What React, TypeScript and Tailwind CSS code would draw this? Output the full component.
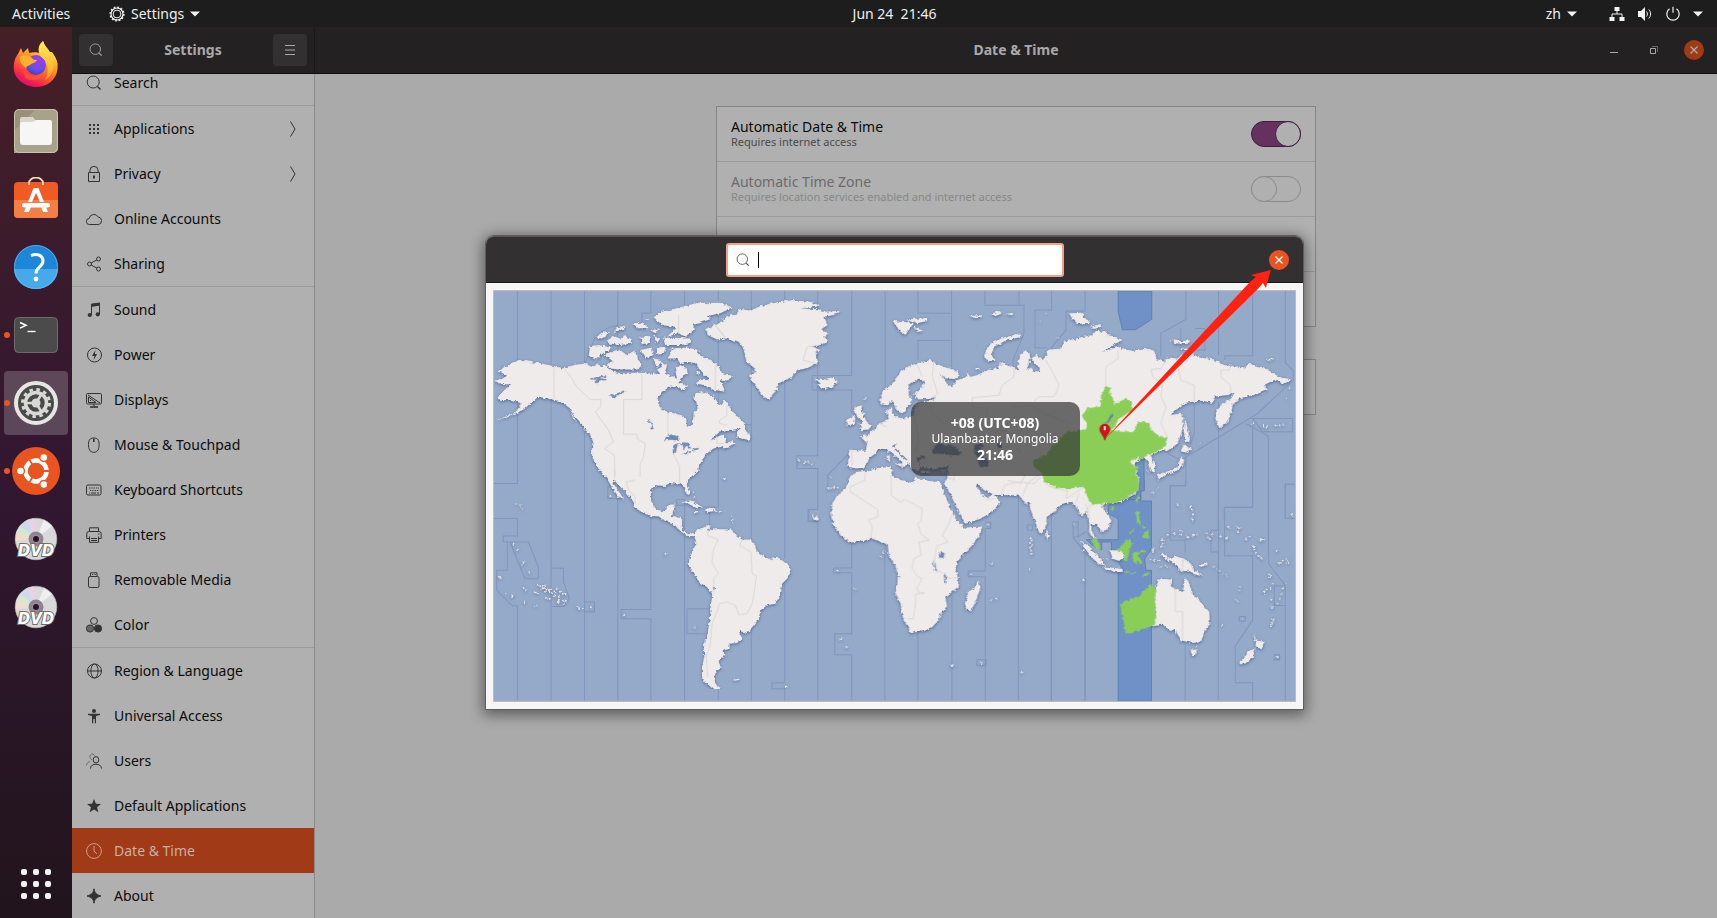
import React from 'react';

interface IconProps {
  className?: string;
}

interface PanelItem {
  label: string;
  icon: React.ReactNode;
  arrow?: boolean;
  active?: boolean;
}

const Glyph: React.FC<{ children: React.ReactNode; className?: string }> = ({ children, className = 'w-4 h-4' }) => (
  <svg viewBox="0 0 16 16" className={`${className} shrink-0`} fill="none" stroke="currentColor" strokeWidth="1" aria-hidden="true">
    {children}
  </svg>
);

const SearchGlyph: React.FC<IconProps> = ({ className }) => (
  <Glyph className={className}>
    <circle cx="7.2" cy="7" r="6" />
    <path d="M11.5 11.5l3 3" strokeWidth="1.4" />
  </Glyph>
);

const groups: PanelItem[][] = [
  [{ label: 'Search', icon: <SearchGlyph /> }],
  [
    {
      label: 'Applications',
      arrow: true,
      icon: (
        <Glyph>
          <path d="M3 4h2m2 0h2m2 0h2M3 8h2m2 0h2m2 0h2M3 12h2m2 0h2m2 0h2" strokeWidth="2" />
        </Glyph>
      ),
    },
    {
      label: 'Privacy',
      arrow: true,
      icon: (
        <Glyph>
          <path d="M2.5 6.5h11v9h-11zM4 6V4a4 3.6 0 0 1 8 0v2" />
          <path d="M8 9.5v3" strokeWidth="2" />
        </Glyph>
      ),
    },
    {
      label: 'Online Accounts',
      icon: (
        <Glyph>
          <path d="M3.5 13.5a3 3 0 0 1-.3-6A4.8 4.8 0 0 1 12.2 6a3.6 3.8 0 0 1 .5 7.5z" />
        </Glyph>
      ),
    },
    {
      label: 'Sharing',
      icon: (
        <Glyph>
          <circle cx="3.5" cy="8" r="2" />
          <circle cx="12.5" cy="3" r="2" />
          <circle cx="12.5" cy="13" r="2" />
          <path d="M5.2 7l5.600-3M5.200 9l5.600 3" />
        </Glyph>
      ),
    },
  ],
  [
    {
      label: 'Sound',
      icon: (
        <Glyph>
          <path d="M5.5 13V2.500l8-1V12" />
          <path d="M5 1.800l9-1.300v3L5 5z" fill="currentColor" stroke="none" />
          <circle cx="3.8" cy="13" r="2.1" fill="currentColor" stroke="none" />
          <circle cx="11.8" cy="12.3" r="2.1" fill="currentColor" stroke="none" />
        </Glyph>
      ),
    },
    {
      label: 'Power',
      icon: (
        <Glyph>
          <circle cx="8.5" cy="8" r="7" />
          <path d="M9.5 3L6 9h2.300l-.6 4L11 7H8.900z" fill="currentColor" stroke="none" />
        </Glyph>
      ),
    },
    {
      label: 'Displays',
      icon: (
        <Glyph>
          <rect x=".5" y="1.5" width="15" height="10.5" rx="1.2" />
          <path d="M2 3l12 8M2.500 5v5.500H10zM4.500 8v1M8 12v3" />
          <path d="M4 15h8" strokeWidth="1.6" />
        </Glyph>
      ),
    },
    {
      label: 'Mouse & Touchpad',
      icon: (
        <Glyph>
          <path d="M2.500 7.500c0-4 1-6.500 5.300-6.500s5.300 2.500 5.300 6.500-1 7.800-5.300 7.800-5.300-3.800-5.300-7.800z" />
          <path d="M7.800 1.500V5" strokeWidth="1.6" />
        </Glyph>
      ),
    },
    {
      label: 'Keyboard Shortcuts',
      icon: (
        <Glyph>
          <rect x=".5" y="3" width="14.5" height="10" rx="1.5" />
          <path d="M3 6h10M4 8.500h9" strokeDasharray="1.3 1" />
          <path d="M3 11h1M5 11h5M11 11h2" />
        </Glyph>
      ),
    },
    {
      label: 'Printers',
      icon: (
        <Glyph>
          <path d="M3.500 4V.8h9V4M3 11.500H.8V6.500a2 2 0 0 1 2-2h10.400a2 2 0 0 1 2 2v5H13M3.500 9.500v5.800h9V9.500M5 11.500h6M5 13.500h6" />
          <path d="M12 7h1.500" />
        </Glyph>
      ),
    },
    {
      label: 'Removable Media',
      icon: (
        <Glyph>
          <rect x="2.5" y="4.5" width="10.5" height="11" rx="1.6" />
          <path d="M4.500 4V.8h6.500V4M6 2.500h1.200M8.500 2.500h1.200" />
        </Glyph>
      ),
    },
    {
      label: 'Color',
      icon: (
        <Glyph>
          <circle cx="8" cy="4" r="3.4" />
          <circle cx="4" cy="11.5" r="3.6" fill="#666" />
          <circle cx="12" cy="11.5" r="3.6" fill="currentColor" />
        </Glyph>
      ),
    },
  ],
  [
    {
      label: 'Region & Language',
      icon: (
        <Glyph>
          <circle cx="8.5" cy="8" r="7" />
          <ellipse cx="8.5" cy="8" rx="3.6" ry="7" />
          <path d="M1.500 8h14" />
        </Glyph>
      ),
    },
    {
      label: 'Universal Access',
      icon: (
        <Glyph>
          <circle cx="8" cy="3" r="2" fill="currentColor" stroke="none" />
          <path d="M2 5.800h12v1.200L10 8v7.200H8.800V11H7.200v4.200H6V8L2 7z" fill="currentColor" stroke="none" />
        </Glyph>
      ),
    },
    {
      label: 'Users',
      icon: (
        <Glyph>
          <path d="M.5 12.500c.3-2.500 1.500-3.500 3.700-4M6 6.500C3 6 3.300 1 6.200 1c1.600 0 2.300 1 2.600 2" opacity=".5" />
          <ellipse cx="10" cy="6.8" rx="2.8" ry="3.2" />
          <path d="M4.500 15.500c.3-3 2-4.200 5.500-4.200s5.200 1.200 5.500 4.200" />
        </Glyph>
      ),
    },
    {
      label: 'Default Applications',
      icon: (
        <Glyph>
          <path d="M8 1l1.900 4.800 5.100.2-4 3.300 1.400 5L8 11.500l-4.400 2.800 1.400-5L1 6l5.100-.2z" fill="currentColor" stroke="none" />
        </Glyph>
      ),
    },
    {
      label: 'Date & Time',
      active: true,
      icon: (
        <Glyph>
          <circle cx="8" cy="8" r="7.4" />
          <path d="M8 3v5.200l3 2.600" />
        </Glyph>
      ),
    },
    {
      label: 'About',
      icon: (
        <Glyph>
          <path d="M8 .8c.8 4.600 2.500 6 7 7.200-4.500 1.200-6.200 2.600-7 7.200-.8-4.600-2.500-6-7-7.200 4.500-1.200 6.200-2.600 7-7.200z" fill="currentColor" />
        </Glyph>
      ),
    },
  ],
];

const FirefoxIcon = () => (
  <svg viewBox="0 -1 48 48" className="w-12 h-12" aria-hidden="true">
    <defs>
      <linearGradient id="fx-body" x1="0.8" y1="0" x2="0.3" y2="1">
        <stop offset="0" stopColor="#fff44f" />
        <stop offset=".35" stopColor="#ffb02e" />
        <stop offset=".6" stopColor="#ff6a2b" />
        <stop offset=".85" stopColor="#f5204d" />
        <stop offset="1" stopColor="#d80a7b" />
      </linearGradient>
      <radialGradient id="fx-globe" cx=".6" cy=".2" r=".9">
        <stop offset="0" stopColor="#a43be8" />
        <stop offset=".6" stopColor="#6a4ee8" />
        <stop offset="1" stopColor="#3d3aa5" />
      </radialGradient>
      <linearGradient id="fx-tail" x1="0" y1="0" x2="0" y2="1">
        <stop offset="0" stopColor="#fff44f" />
        <stop offset="1" stopColor="#ff9a2a" />
      </linearGradient>
    </defs>
    <path d="M6 14l3-6 2 5 5-5 1 5c4-1 8-1 10 0l4-12c2 6 4 7 6 11l3 0c6 8 7 16 4 23-4 8-11 12-20 12S5 41 2.500 33C.8 26 2 19 6 14z" fill="url(#fx-body)" />
    <circle cx="24" cy="25" r="10" fill="url(#fx-globe)" />
    <path d="M27 13c-1-5 0-9 4-12 2 6 5 7 7 11 5 3 7 8 8 14-1-3-3-5-5-6 2 9-1 16-8 20 3-5 4-11 1-17-1-5-6-5-7-10z" fill="url(#fx-tail)" />
    <path d="M8 17c4-3 9-2 12 1 1 2 3 2 5 2-1 3-5 3-7 5-2 1-4 1-4 3-3-2-7-6-6-11z" fill="#ffb12e" />
    <path d="M12 30c3 6 13 8 20 3-3 7-11 9-17 6-3-2-4-5-3-9z" fill="#ff5a35" opacity=".7" />
  </svg>
);

const FilesIcon = () => (
  <svg viewBox="0 0 44 44" className="w-11 h-11" aria-hidden="true">
    <rect width="44" height="44" rx="5" fill="#989179" />
    <path d="M0 44V22L22 0h17a5 5 0 0 1 5 5v34a5 5 0 0 1-5 5z" fill="#a9a28b" />
    <rect x=".5" y=".5" width="43" height="43" rx="5" fill="none" stroke="#c9c4b0" />
    <path d="M6 10a2 2 0 0 1 2-2h11l3 4v8H6z" fill="#d9d5c7" />
    <path d="M6 15a2 2 0 0 1 2-2h11l3-2h14a2 2 0 0 1 2 2v20a3 3 0 0 1-3 3H9a3 3 0 0 1-3-3z" fill="#f7f6f5" />
  </svg>
);

const SoftwareIcon = () => (
  <svg viewBox="0 2 44 44" className="w-11 h-11" aria-hidden="true">
    <rect y="7" width="44" height="36" rx="4" fill="#f15a24" />
    <path d="M0 25h44v14a4 4 0 0 1-4 4H4a4 4 0 0 1-4-4z" fill="#f37f45" />
    <path d="M15 10V8a7 5.400 0 0 1 14 0v2" fill="none" stroke="#f5dcb0" strokeWidth="1.8" />
    <path d="M14 27l5.500-14h5L30 27h-4l-4-9-4 9zM12 32h5l-2 5h-5zM27 32h5l2 5h-5z" fill="#fff" />
    <rect x="8" y="28" width="28" height="4.5" rx="2.2" fill="#fff" />
  </svg>
);

const HelpIcon = () => (
  <svg viewBox="0 0 44 44" className="w-11 h-11" aria-hidden="true">
    <circle cx="22" cy="22" r="22" fill="#1e86d9" />
    <path d="M0 24a22 20 0 0 0 44 0z" fill="#46a9e9" />
    <circle cx="22" cy="22" r="21.5" fill="none" stroke="#6bbcf0" opacity=".7" />
    <path d="M17 10.500c7-2.500 12 .5 12 5.500 0 6-7 6-7 12.500" fill="none" stroke="#fff" strokeWidth="3" />
    <circle cx="22" cy="34" r="2.4" fill="#fff" />
  </svg>
);

const TerminalIcon = () => (
  <svg viewBox="0 0 44 36" className="w-11 h-9" aria-hidden="true">
    <rect x=".5" y=".5" width="43" height="35" rx="4" fill="#4b4b4b" stroke="#6b6b6b" />
    <path d="M6 5.500l6 2.800-6 2.800" fill="none" stroke="#fff" strokeWidth="1.6" />
    <path d="M13.500 14.500h8" stroke="#fff" strokeWidth="1.4" />
  </svg>
);

const SettingsIcon = () => (
  <svg viewBox="0 0 44 44" className="w-11 h-11" aria-hidden="true">
    <circle cx="22" cy="22" r="20" fill="#4a4a4a" stroke="#e6e6e4" strokeWidth="4" />
    <circle cx="22" cy="22" r="13.5" fill="none" stroke="#d9d9d7" strokeWidth="3" strokeDasharray="3.5 3.57" />
    <circle cx="22" cy="22" r="10.5" fill="none" stroke="#d9d9d7" strokeWidth="3.6" />
    <path d="M22 22h-9M22 22l5-8M22 22l5 8" stroke="#d9d9d7" strokeWidth="2.5" />
    <circle cx="22" cy="22" r="4.5" fill="#d9d9d7" />
  </svg>
);

const UbuntuIcon = () => (
  <svg viewBox="0 0 48 48" className="w-12 h-12" aria-hidden="true">
    <circle cx="24" cy="24" r="24" fill="#e95420" />
    <circle cx="24" cy="24" r="10.5" fill="none" stroke="#fff" strokeWidth="4.5" />
    <path d="M24 24H40M24 24L16 10.100M24 24L16 37.900" stroke="#e95420" strokeWidth="1.8" />
    <g fill="#fff" stroke="#e95420" strokeWidth="1.5">
      <circle cx="8.5" cy="24" r="4" />
      <circle cx="31.8" cy="10.5" r="4" />
      <circle cx="31.8" cy="37.5" r="4" />
    </g>
  </svg>
);

const DvdIcon = () => (
  <svg viewBox="0 0 44 44" className="w-11 h-11" aria-hidden="true">
    <circle cx="22" cy="22" r="20.8" fill="#d9d9d9" stroke="#bdbdbd" strokeWidth=".6" />
    <path d="M22 22L6 8.500 2 16z" fill="#cfe9d4" />
    <path d="M22 22L2.500 15 1.500 24z" fill="#f0dccb" />
    <path d="M22 22L13 3l-6 5z" fill="#cbdcf0" />
    <path d="M22 22L20 1.200l-7 1.800z" fill="#ead2e6" />
    <path d="M22 22L30 3l8 6z" fill="#efefef" />
    <circle cx="22" cy="22" r="7.5" fill="#8e8490" />
    <circle cx="22" cy="22" r="3.6" fill="#2c1228" stroke="#b5adb5" strokeWidth=".8" />
    <text
      x="22"
      y="39"
      textAnchor="middle"
      className="font-['DejaVu_Sans'] text-[15px] font-bold italic"
      fill="#fff"
      stroke="#6c6c6c"
      strokeWidth="2"
      paintOrder="stroke"
    >
      DVD
    </text>
  </svg>
);

const dockApps = [
  { name: 'Firefox', icon: <FirefoxIcon /> },
  { name: 'Files', icon: <FilesIcon /> },
  { name: 'Ubuntu Software', icon: <SoftwareIcon /> },
  { name: 'Help', icon: <HelpIcon /> },
  { name: 'Terminal', icon: <TerminalIcon />, running: true },
  { name: 'Settings', icon: <SettingsIcon />, running: true, focused: true },
  { name: 'Ubuntu', icon: <UbuntuIcon />, running: true },
  { name: 'DVD 1', icon: <DvdIcon /> },
  { name: 'DVD 2', icon: <DvdIcon /> },
];

const Caret = () => (
  <svg viewBox="0 0 10 6" className="w-[10px] h-[6px]" aria-hidden="true">
    <path d="M0 .5h10L5 5.500z" fill="#f2f2f2" />
  </svg>
);

const TopBar = () => (
  <header className="h-[27px] shrink-0 flex items-center bg-[#1d1d1d] text-[#eeeeee] text-sm">
    <div className="w-[72px] shrink-0 pl-3">
      <button>Activities</button>
    </div>
    <div className="flex-1 grid grid-cols-[1fr_auto_1fr] items-center">
      <button className="flex items-center gap-[6px] pl-[37px] justify-self-start">
        <svg viewBox="0 0 16 16" className="w-4 h-4" fill="none" stroke="currentColor" aria-hidden="true">
          <circle cx="8" cy="8" r="6.6" strokeWidth="2" strokeDasharray="1.7 1.76" />
          <circle cx="8" cy="8" r="6" strokeWidth="1.2" />
          <circle cx="8" cy="8" r="3.9" strokeWidth="1" />
        </svg>
        <span>Settings</span>
        <Caret />
      </button>
      <button className="whitespace-pre">Jun 24  21:46</button>
      <div className="flex items-center justify-self-end pr-[14px]">
        <button className="flex items-center gap-[6px]">
          zh <Caret />
        </button>
        <button className="flex items-center gap-3 ml-8" aria-label="System menu">
          <svg viewBox="0 0 16 16" className="w-4 h-4" aria-hidden="true">
            <path d="M5.500 1h5v4h-5zM.5 11h5v4h-5zM10.500 11h5v4h-5z" fill="#f2f2f2" />
            <path d="M8 5v3M3 11V8h10v3" fill="none" stroke="#f2f2f2" />
          </svg>
          <svg viewBox="0 0 16 16" className="w-4 h-4" fill="none" stroke="#f2f2f2" aria-hidden="true">
            <path d="M1 5h3l4-4v14l-4-4H1z" fill="#f2f2f2" stroke="none" />
            <path d="M9.500 5.500c1.200 1.500 1.200 3.500 0 5M11.800 3.500c2.400 2.600 2.400 6.400 0 9" />
          </svg>
          <svg viewBox="0 0 16 16" className="w-4 h-4" fill="none" stroke="#f2f2f2" aria-hidden="true">
            <path d="M8 .8v6M4.500 2.800a6.200 6.200 0 1 0 7 0" strokeWidth="1.2" />
          </svg>
          <Caret />
        </button>
      </div>
    </div>
  </header>
);

const Dock = () => (
  <nav className="w-[72px] shrink-0 flex flex-col items-center pt-1 bg-linear-to-b from-[#451f26] via-[#321731] to-[#21141c]">
    <ul className="flex flex-col gap-1">
      {dockApps.map((app) => (
        <li key={app.name} className="relative">
          {app.running && <span className="absolute top-[29px] left-0 w-[6px] h-[6px] rounded-full bg-[#e95420]" />}
          <button
            aria-label={app.name}
            className={`w-16 h-16 flex items-center justify-center rounded-[4px] ${app.focused ? 'bg-white/20' : ''}`}
          >
            {app.icon}
          </button>
        </li>
      ))}
    </ul>
    <button className="mt-auto mb-[19px] grid grid-cols-3 gap-[6px]" aria-label="Show Applications">
      {Array.from({ length: 9 }, (_, i) => (
        <span key={i} className="w-[6px] h-[6px] rounded-[2px] bg-[#f2f2f2]" />
      ))}
    </button>
  </nav>
);

const Sidebar = () => (
  <aside className="flex-1 min-h-0 flex flex-col justify-end overflow-hidden bg-[#b0b0b0] border-r border-[#8b8b8b]">
    {groups.map((items, i) => (
      <ul key={i} className={i > 0 ? 'border-t border-[#9b9b9b]' : ''}>
        {items.map((item) => (
          <li key={item.label}>
            <button
              className={`w-full h-[45px] flex items-center gap-3 pl-[14px] pr-[18px] text-sm text-left ${
                item.active ? 'bg-[#a03a17] text-[#c9b0a6]' : 'text-[#0c0c0c]'
              }`}
            >
              <span className={item.active ? 'text-[#cf9c8b]' : 'text-[#333333]'}>{item.icon}</span>
              <span className="flex-1">{item.label}</span>
              {item.arrow && (
                <svg viewBox="0 0 6 16" className="w-[6px] h-4" fill="none" stroke="#333" aria-hidden="true">
                  <path d="M.5 .5L5 8 .5 15.500" />
                </svg>
              )}
            </button>
          </li>
        ))}
      </ul>
    ))}
  </aside>
);

const Setting: React.FC<{ id: string; title: string; note: string; on?: boolean; disabled?: boolean }> = ({ id, title, note, on, disabled }) => (
  <div className="h-[55px] flex items-center justify-between px-[14px] border-b border-[#9b9b9b]">
    <label htmlFor={id} className={disabled ? 'text-[#6b6b6b]' : 'text-[#0c0c0c]'}>
      <span className="block text-sm leading-4">{title}</span>
      <span className={`block text-[11px] leading-[14px] ${disabled ? 'text-[#858985]' : 'text-[#4b4b4b]'}`}>{note}</span>
    </label>
    <input
      id={id}
      type="checkbox"
      role="switch"
      defaultChecked={on}
      disabled={disabled}
      className="appearance-none w-[50px] h-[26px] rounded-full border border-[#8b8b8b] flex items-center checked:bg-[#65315e] checked:border-[#3f1c3a] before:content-[''] before:w-[26px] before:h-[26px] before:-m-px before:rounded-full before:border before:border-[#8b8b8b] before:bg-[#b0b0b0] checked:before:ml-[23px] checked:before:border-[#3f1c3a]"
    />
  </div>
);

// Each region of the map is drawn at three times its size from its own corner.
const AT = {
  northAmerica: 'translate(480 230) scale(.33333)',
  southAmerica: 'translate(480 470) scale(.33333)',
  europe: 'translate(700 280) scale(.33333)',
  africa: 'translate(800 440) scale(.33333)',
  asia: 'translate(1000 280) scale(.33333)',
  oceania: 'translate(1020 480) scale(.33333)',
};

const Isles: React.FC<{ points: number[][]; r?: number }> = ({ points, r = 3 }) => (
  <>
    {points.map(([x, y]) => (
      <circle key={`${x}-${y}`} cx={x} cy={y} r={r} />
    ))}
  </>
);

const ZoneLines = () => (
  <g fill="none" stroke="#8196bb" strokeWidth="3">
    <g transform={AT.southAmerica}>
      <path d="M112-540V40H42M42 145H112V197H70V215H145L175 290V325H135L90 215M82 215V300H50V360L97 406H112V690" />
      <path d="M213-540V690M213 294H250V334L268 385L250 408H213M313-540V690M313 395H343V424H313M413-540V690" />
      <path d="M512-540V-470H485V-440M512 120V417H423V445H512V690M613-540V-400M613 105H590V88H613V690M692 415H620V490H680" />
      <path d="M714-540V110H645M688 125V165M714 655V690M813-540V230M813-136H780M813 470V690M913-540V265M913 330V637H875V655H913V690M1013 118H985V153H1013M410 50H383V85H425" />
      <path d="M413-435L380-425L345-400L315-320" />
    </g>
    <g transform={AT.europe}>
      <path d="M454 33V286H335V330H454V400M352 33V527H290V565H352V688H322M445 520L382 585V630M554 33V340" />
      <path d="M652 33V100H753M753 33V265M753 181H652V240M853 33V76H970V160L937 240V262M955 33V76" />
    </g>
    <g transform={AT.africa}>
      <path d="M52 208H23V243H52V780M154 305V383H100V397H154V580H103V643H154V780M253 320V780M352 578V780M454 460V780" />
      <path d="M554 245H570V265H554V392H503V409H554V780M653 165V780M752 220V780M853 310V780M817 245H832V290H817ZM832 290L855 275M817 292L860 345M680 254h16v16h-16zM529 658h27v18h-27z" />
    </g>
    <g transform={AT.asia}>
      <path d="M153 33V90H103V203H137M253 33V93H196V150L150 205M555 33V118L480 160V230M653 33V225M583 145H612V210H540V145" />
      <path d="M755 33V227H672V240M853 33V248L877 272V300L770 400L540 540L500 520M875 415H755L785 455H875ZM735 430L802 468V820M555 530V616H508V720" />
      <path d="M653 365V900M670 720V682H755V445M883 612H853V715H883M580 340V460L560 520" />
    </g>
    <g transform={AT.oceania}>
      <path d="M494 0V17H448V180H493V220M493 490V660M592 0V150H570V215H592V660M695 0V80H611V226H695V420L643 497V607H695V660" />
      <path d="M743 0V250L793 315V375H760V317H793M793 375V660M193 305V660M92 180V660M822 12H793V115H822M655 408h18v14h-18zM760 523h16v15h-16z" />
    </g>
  </g>
);

const Land = () => (
  <g fill="#efebea" filter="url(#coast)">
    <g transform={AT.northAmerica}>
      <path d="M43 573L75 558L105 548L125 520L95 510L65 510L50 505L62 490L75 478L90 463L62 462L45 452L75 443L80 435L55 425L70 412L95 398L120 388L150 396L185 400L220 408L250 415L270 408L290 403L315 400L335 410L350 402L365 408L385 405L380 412L400 425L425 430L445 428L485 428L515 430L540 432L530 418L545 410L540 395L560 405L555 425L575 440L590 445L585 420L600 405L620 415L622 430L605 440L595 455L590 470L570 470L545 485L533 505L535 525L548 540L575 548L605 555L618 565L620 585L632 590L638 570L640 550L652 535L648 515L640 505L645 490L670 485L700 500L715 520L725 525L732 508L745 525L760 550L790 575L792 588L765 598L735 600L715 605L700 618L692 630L715 618L730 612L738 625L735 640L755 632L765 640L730 655L725 648L700 655L680 670L665 690L655 705L655 720L632 740L620 752L620 765L630 785L628 793L615 785L608 765L595 760L570 760L555 767L525 765L512 780L512 810L525 835L545 842L558 838L562 823L585 823L578 845L575 860L605 863L605 900L625 912L645 908L650 918L625 917L610 910L592 895L580 880L550 870L535 858L515 858L490 848L462 832L460 815L440 790L415 765L402 750L400 760L420 790L433 810L415 800L395 770L380 745L360 722L345 700L335 680L335 655L340 640L335 625L325 605L310 590L295 570L280 555L270 535L250 520L235 512L200 505L175 500L150 520L135 535L120 545L75 562Z" />
      <path d="M520 262L545 245L600 232L650 218L720 218L757 232L720 250L680 258L690 268L640 285L640 300L615 320L595 310L560 320L590 292L545 285ZM548 322L630 325L635 338L600 345L555 345Z" />
      <path d="M565 385L575 355L620 352L650 358L660 375L690 390L715 410L725 428L755 438L740 455L720 450L735 485L700 480L670 465L645 460L660 450L685 450L670 430L655 415L650 400L620 395L600 400L590 385Z" />
      <path d="M370 372L400 365L420 360L440 375L465 360L470 385L485 400L475 418L420 418L390 415L380 402L400 395ZM330 348L355 345L395 352L385 362L365 370L345 388L325 378Z" />
      <path d="M380 332L400 318L420 325L435 315L455 328L455 340L420 345L390 340ZM345 322L375 303L390 308L365 325ZM412 292L432 288L432 300L400 305ZM460 280L490 278L503 295L470 295ZM480 320L510 318L512 340L485 342ZM518 315L540 325L530 340ZM480 360L515 352L520 375L495 385ZM530 352L558 350L550 370L530 375ZM520 385L545 390L530 415ZM590 455L625 470L610 480L590 470ZM495 265L506 270L500 272ZM510 300L540 298L525 310Z" />
      <path d="M770 605L790 585L795 600L810 615L810 630L770 622ZM310 595L348 615L342 625ZM272 545L290 575L280 570ZM645 420L660 425L655 435Z" />
    </g>
    <g transform={AT.southAmerica}>
      <path d="M640 188L660 175L688 165L690 180L710 176L750 178L765 192L785 208L808 208L825 225L830 245L865 265L895 262L925 285L932 298L920 325L905 340L902 370L885 400L860 405L840 420L835 445L820 465L800 488L775 480L785 505L770 518L748 520L748 535L730 540L732 555L715 575L722 590L705 610L700 630L710 645L725 655L700 657L675 635L665 620L665 590L672 560L670 530L682 490L688 450L692 400L696 370L680 350L655 335L640 305L623 285L628 265L635 240L648 222Z" />
      <path d="M600 97L630 90L667 110L650 114L620 98ZM672 120L690 112L710 121L685 125ZM641 122h12v5h-12zM716 122h9v5h-9zM758 628L775 624L778 628L762 631Z" />
      <Isles points={[[127, 115], [100, 220], [114, 235], [130, 274], [124, 284], [147, 309], [57, 319], [61, 324], [76, 370], [97, 376], [131, 396], [167, 406], [134, 353], [138, 360], [167, 366], [173, 368], [173, 347], [180, 348], [188, 345], [196, 345], [187, 354], [194, 352], [199, 357], [194, 364], [205, 360], [211, 358], [208, 365], [214, 368], [225, 366], [229, 355], [240, 364], [223, 376], [236, 376], [248, 370], [254, 372], [197, 382], [209, 385], [236, 388], [236, 395], [251, 391], [257, 391], [251, 400], [292, 410], [297, 416], [308, 413], [332, 414], [433, 433], [391, 77], [731, 24], [556, 250], [918, 649]]} />
      <Isles r={2} points={[[110, 101], [120, 107], [640, 66], [643, 80], [752, 138], [757, 148], [757, 158], [644, 470]]} />
    </g>
    <g transform={AT.europe}>
      <path d="M18 145L45 135L75 122L65 118L110 100L118 86L150 92L180 78L220 68L280 60L330 65L358 75L350 80L300 85L355 88L365 95L420 92L400 105L370 110L372 120L382 135L363 148L384 160L372 170L386 185L360 195L335 200L360 210L342 220L357 245L325 262L290 272L275 290L245 305L235 310L230 330L215 345L210 360L190 350L175 330L160 310L146 285L167 275L160 262L138 245L130 205L115 185L80 175L50 178L22 165Z" />
      <path d="M342 295L365 300L400 290L412 305L395 320L375 327L350 315L358 308Z" />
      <path d="M462 380L485 375L482 395L492 400L488 408L500 425L514 435L505 448L475 450L485 440L475 432L485 425L478 415L462 400ZM440 420L455 405L465 410L462 430L438 437Z" />
      <path d="M575 122L600 125L640 128L632 140L615 165L600 155ZM622 118L680 113L683 122L650 130ZM640 138L665 153L650 156ZM808 108L840 105L842 112L810 113ZM870 102L895 92L905 100L885 108ZM912 102L938 98L935 106Z" />
      <path d="M848 232L855 215L870 190L900 175L958 160L962 170L915 182L880 200L872 225L885 242L865 243Z" />
      <path d="M540 350L545 335L575 310L600 275L625 258L655 248L690 240L710 252L730 260L765 270L778 285L765 297L735 295L718 280L735 300L740 315L755 318L770 300L800 290L798 275L810 290L830 285L860 270L890 265L905 258L895 245L930 260L990 285V610H745L740 570L745 558L700 568L660 562L655 540L680 532L668 526L650 535L660 565L650 572L640 570L630 558L620 538L595 515L580 500L590 488L575 498L590 515L610 535L625 543L615 557L604 562L605 548L585 530L565 510L550 505L530 510L525 520L505 535L500 550L490 562L465 565L440 558L445 530L443 508L470 510L495 512L500 490L478 468L500 465L525 445L535 430L560 420L565 410L555 395L575 380L575 400L590 412L610 415L640 405L640 380L650 370L690 362L705 355L650 358L640 340L660 325L672 305L655 295L625 315L625 345L635 360L620 380L610 400L590 395L575 360L560 375L540 372Z" />
      <path d="M583 550L606 550L600 560ZM558 527L568 525L568 545L560 545ZM562 510L567 508L566 522ZM662 572H685V578H662ZM720 575L738 568L730 577ZM822 262h14v6h-14zM332 706L345 712L350 706L352 722L340 716Z" />
      <Isles points={[[295, 540], [314, 546], [323, 547], [334, 552], [390, 591], [71, 594], [383, 626], [391, 624], [400, 622], [412, 622], [493, 355]]} />
    </g>
    <g transform={AT.africa}>
      <path d="M165 95L195 92L240 82L270 80L275 90L272 105L300 118L335 128L345 112L385 122L420 125L425 145L440 180L455 215L465 235L490 262L545 258L540 280L515 315L490 340L470 365L465 385L473 415L472 440L435 470L440 500L420 520L415 540L390 565L365 573L330 577L320 555L305 525L300 490L283 455L295 410L285 380L265 345L262 315L240 305L215 295L180 303L150 307L120 285L100 255L92 230L95 190L110 165L135 145L145 115Z" />
      <path d="M445 90L440 112L430 132L440 145L460 185L480 225L495 250L540 235L575 215L600 185L585 170L578 160L565 174L545 165L525 132L532 130L550 150L580 163L620 165L655 165L665 180L680 190L690 185L685 200L695 225L705 250L718 282L728 275L738 250L738 230L760 215L785 190L810 185L820 190L835 215L845 228L856 215L865 250L865 275L875 292L890 298L872 270L872 255L885 250L895 262L905 277L925 262L932 240L915 215L905 200L915 185L870 150L800 90Z" />
      <path d="M533 420L540 440L525 485L512 510L497 508L493 490L500 475L498 455L520 445ZM738 270L748 285L742 297L736 290Z" />
      <Isles points={[[36, 224], [46, 228], [48, 234], [108, 391], [164, 445], [121, 596], [139, 621], [248, 336], [241, 347], [513, 401], [573, 368], [573, 480], [587, 474], [562, 253], [690, 294], [693, 301], [688, 308], [693, 315], [688, 322], [691, 331], [691, 341], [685, 386], [849, 418], [456, 674], [542, 667], [665, 694]]} />
    </g>
    <g transform={AT.asia}>
      <path d="M-5 250L35 268L45 280L58 285L50 260L58 225L75 208L88 222L88 245L78 270L92 262L100 275L118 272L108 255L92 235L105 222L125 240L140 225L135 210L180 205L190 185L240 172L275 165L285 152L315 155L320 165L345 170L362 180L345 192L305 215L350 200L380 210L400 212L440 205L465 215L465 235L490 245L500 232L530 235L545 220L560 218L600 232L640 238L670 255L730 262L745 252L790 262L810 275L835 290L870 298L850 312L820 300L790 315L800 330L760 345L735 350L715 355L695 375L692 395L680 425L655 445L643 415L645 390L665 370L690 355L700 338L680 345L640 350L635 368L600 362L555 368L530 385L510 405L540 400L548 415L545 450L530 490L500 512L480 512L450 525L462 555L462 577L448 573L440 545L430 530L400 550L415 600L405 640L360 665L300 670L270 665L100 650L-5 640Z" />
      <path d="M205 100L245 98L250 112L270 128L232 132L215 118ZM268 140L298 132L305 140L280 147ZM518 178L540 184L570 180L560 192L520 190ZM540 205h18v5h-18zM795 237L815 234L818 240L800 242Z" />
      <path d="M470 598L472 583L510 570L530 560L540 528L550 540L545 560L515 578L500 578L480 595ZM540 512L548 492L572 508L555 518ZM552 415L560 440L567 480L552 487L548 450Z" />
      <Isles points={[[757, 429], [787, 436], [797, 439], [823, 436], [835, 435], [847, 433], [866, 428], [532, 675], [569, 680], [573, 690], [576, 702], [574, 715], [872, 703], [440, 572]]} />
      <Isles r={2} points={[[117, 124], [135, 103], [508, 183], [512, 194], [865, 325], [855, 355], [600, 488], [590, 492], [580, 499], [468, 625], [458, 636], [170, 174]]} />
    </g>
    <g transform={AT.oceania}>
      <path d="M178 180L200 195L235 230L250 255L235 252L205 225ZM248 258L305 266L306 275L255 268ZM268 210L305 210L312 228L295 242L275 235ZM415 222L435 220L440 235L465 228L490 235L510 250L520 268L547 287L530 285L500 270L480 278L470 255L440 240ZM535 255L560 245L558 254L540 260Z" />
      <path d="M403 325L412 310L410 298L430 295L452 298L450 318L485 335L493 290L505 310L515 340L540 365L565 395L567 425L550 460L540 482L515 488L480 480L470 465L462 445L448 452L425 432L385 440L403 400ZM508 507L532 507L522 527L515 527ZM698 460L708 480L732 485L720 505L705 498ZM703 503L698 530L672 550L655 548L680 515ZM640 355L655 362L652 366Z" />
      <Isles points={[[472, 74], [440, 166], [461, 160], [480, 152], [481, 163], [497, 169], [503, 171], [516, 166], [526, 162], [557, 160], [562, 172], [567, 176], [573, 163], [597, 170], [616, 175], [625, 142], [646, 141], [655, 143], [650, 152], [675, 177], [686, 170], [719, 176], [725, 178], [719, 181], [698, 197], [700, 207], [705, 217], [713, 227], [721, 233], [767, 212], [776, 248], [785, 241], [795, 237], [800, 239], [801, 246], [742, 282], [747, 289], [756, 312], [750, 324], [737, 328], [731, 336], [732, 344], [751, 358], [751, 379], [785, 324], [781, 340], [775, 355], [770, 369], [757, 418], [753, 427], [750, 434], [425, 180], [424, 190], [424, 199], [396, 207], [396, 215], [388, 240], [401, 239], [413, 238], [603, 433], [664, 415], [767, 530], [813, 103], [188, 298], [188, 210], [510, 78], [513, 90], [516, 103], [515, 118]]} />
      <Isles r={2} points={[[578, 260], [588, 266], [597, 272], [607, 279], [617, 286], [656, 319], [656, 330], [420, 260], [436, 258], [250, 234], [260, 236], [161, 131], [526, 498], [396, 38], [795, 309]]} />
    </g>
  </g>
);

const Borders = () => (
  <g fill="none" stroke="#d8d3d2" strokeWidth="2.5" strokeLinejoin="round">
    <g transform={AT.northAmerica}>
      <path d="M222 408V508M252 415L275 445L290 470L330 508H362V530L345 545L365 572L385 600L400 635L373 655L403 675V745M485 430V508H430V612H470V625L495 640L490 680L480 700V740M563 548V615M580 672L598 710V760M740 525V555L718 570V580L740 585M710 618V640L730 640M595 255V310M705 405V480M700 280L735 320" />
    </g>
    <g transform={AT.southAmerica}>
      <path d="M403 0L405 15M465 30L438 35L445 60L465 80V100M690 165L680 195L714 208L700 235L695 275L714 310L700 325V370M785 208L778 225L812 245L815 310L828 315L820 375L815 400L800 430L775 433L765 405L740 395L718 400L708 430L695 460L690 520L678 560L682 620" />
    </g>
    <g transform={AT.europe}>
      <path d="M45 135L75 175M355 195L320 200L308 240L345 250M650 255L665 290M700 245L695 290L712 340L690 355M640 400L650 450L655 490L640 520M455 512V555M535 430L560 440M690 365L695 400L730 430M940 262L940 290L905 315L895 345L850 350L815 352V380L860 385V425M870 430L920 455L960 520" />
    </g>
    <g transform={AT.africa}>
      <path d="M195 95L193 120L148 140L150 155L232 208V230L205 238L215 260L210 295M272 105V165L300 185L312 178L365 205L362 240L352 250L360 280L385 300L355 305L362 345L340 355L335 385L350 408L365 415L350 440L352 455L372 458L345 462V490L338 535H320M455 220L445 250L425 285L442 305L408 318L402 360L410 390L430 400M435 415L470 412M440 112L460 120V85M555 180L580 175M600 165L612 135L650 125L700 130L720 110M665 170L680 130L720 100M735 130L750 140L800 152L795 175L820 160L850 140M825 190L835 160M865 235L862 200L890 185" />
    </g>
    <g transform={AT.asia}>
      <path d="M135 240L152 270L175 315L160 350H115L100 362M350 208L352 235L315 260V318M490 250L480 265L450 268L455 290L485 310L480 350L495 380L480 430L500 470M545 235L532 265L540 300L580 315V370M690 258L685 270H660V290L688 315L690 340M260 445L300 450L335 455M30 380L90 375L130 400L210 430M20 600L60 610L75 580" />
    </g>
    <g transform={AT.oceania}>
      <path d="M403 325V432M463 325V393H485V480M485 235V275M195 70L200 95" />
    </g>
  </g>
);

const SelectedZone = () => (
  <g fill="#6f91c8" stroke="#58749f" strokeWidth="2">
    <g transform={AT.asia}>
      <path d="M352 33H453V118L405 149H365L352 95Z" />
    </g>
    <g transform={AT.oceania}>
      <path d="M262 75L300 65L345 45L310 -20L270-55L310-60V0H370V30H360V62H392V205L372 235L375 270H392V662H292V275L308 270L280 225L272 208V185H243V208L215 195L197 178H292V115L262 100Z" />
    </g>
    <g transform={AT.asia}>
      <path d="M385 545L430 535V632H420V658H370L400 600Z" />
    </g>
  </g>
);

const SelectedLand = () => (
  <g fill="#8bce57" filter="url(#rough)">
    <g transform={AT.asia}>
      <path d="M95 540L140 520L170 480L200 455L240 450L258 445L258 425L242 412L258 385L300 378L300 350L315 318L328 322L328 340L338 360L340 372L375 355L395 368L390 378L398 385L378 400L355 415L332 450L365 455L400 452L405 430L430 422L445 430L450 450L480 470L500 470L495 495L475 512L440 525L412 540L414 530L388 545L400 560L415 555L405 575L415 600L410 630L370 660L335 668L310 670L275 672L262 655L250 620L210 625L170 622L130 605L125 580L100 560Z" />
      <path d="M313 432L322 418L331 402L336 404L332 416L324 426Z" fill="#5f7fb4" />
    </g>
    <g transform={AT.oceania}>
      <path d="M403 322L388 312L370 330L350 350L310 362L300 375L302 400L308 420L312 445L312 455L325 460L345 452L385 440L403 432ZM210 175L230 178L240 208L225 202ZM285 210L310 188L325 172L335 188L325 215L318 242L306 240L312 225L300 212Z" />
      <path d="M338 212L345 216L375 207L372 214L350 220L365 248L358 252L350 238L345 256L336 240ZM345 93L357 95L355 115L364 132L348 128ZM362 135L375 140L368 148ZM370 155L382 148L386 176L362 172ZM325 158L342 143L340 148L328 162ZM267 80L282 78L275 95ZM343 62L352 45L355 52L348 68ZM308 272L345 277V282L310 276ZM365 284L388 275L386 280L370 288Z" />
    </g>
  </g>
);

const Lakes = () => (
  <g fill="#7188b0" filter="url(#rough)">
    <g transform={AT.northAmerica}>
      <path d="M330 444L350 442L375 434L378 438L362 445L380 447L378 451L360 451L348 460L342 456L350 449L332 448ZM385 496L400 494L412 489L432 481L436 485L420 491L405 502L392 499ZM502 568Q508 566 511 576Q514 580 521 595L515 599L511 584Z" />
      <path d="M550 630Q562 612 580 612L598 624L596 632L575 629ZM578 670Q575 646 590 640L612 637L606 642L592 644L586 670ZM606 636L620 638L632 652L625 656L618 646L610 660ZM606 670L618 666L632 662L630 667L612 674ZM632 657L654 653V658L636 661Z" />
    </g>
    <g transform={AT.africa}>
      <path d="M417 336L433 336L429 352L414 352ZM398 358L402 376L411 394L404 390L397 372ZM429 400L436 404L438 432L433 430Z" />
    </g>
    <g transform={AT.europe}>
      <path d="M693 523L702 498Q712 486 722 488L735 497L752 492L762 502L782 516L775 524L750 526L715 520ZM822 496L832 488L845 486L850 500L836 506L850 532L862 540V560L842 562L830 550L832 535L820 512ZM890 490H903V502H890Z" />
    </g>
    <g transform={AT.southAmerica}>
      <path d="M683 176L690 178L688 186ZM698 350L706 355L700 358Z" />
    </g>
  </g>
);

const WorldMap = () => (
  <svg viewBox="494 291 800 409" className="block w-full h-auto bg-[#95a9c9]" role="img" aria-label="World time zones">
    <defs>
      <filter id="coast" x="0" y="0" width="100%" height="100%" colorInterpolationFilters="sRGB">
        <feTurbulence type="fractalNoise" baseFrequency=".3" numOctaves="2" seed="4" result="noise" />
        <feDisplacementMap in="SourceGraphic" in2="noise" scale="4" xChannelSelector="R" yChannelSelector="G" result="land" />
        <feDropShadow in="land" dx="0" dy="1" stdDeviation="1.6" floodColor="#3c5480" floodOpacity=".8" />
      </filter>
      <filter id="rough" x="0" y="0" width="100%" height="100%" colorInterpolationFilters="sRGB">
        <feTurbulence type="fractalNoise" baseFrequency=".3" numOctaves="2" seed="4" result="noise" />
        <feDisplacementMap in="SourceGraphic" in2="noise" scale="4" xChannelSelector="R" yChannelSelector="G" />
      </filter>
    </defs>
    <ZoneLines />
    <SelectedZone />
    <Land />
    <Borders />
    <Lakes />
    <SelectedLand />
    <g>
      <path d="M1104 440c-1-5-5-7-5-11a5 5 0 0 1 10 0c0 4-4 6-5 11z" fill="#d3131b" stroke="#8f0d12" strokeWidth=".6" />
      <path d="M1104 426v4" stroke="#fff" strokeWidth="1.8" />
    </g>
  </svg>
);

const TimezoneDialog = () => (
  <div
    role="dialog"
    aria-label="Select time zone"
    className="relative w-[817px] max-w-full rounded-t-lg bg-[#f6f6f6] shadow-[0_0_0_1px_#5e5e5e,0_3px_14px_3px_rgba(0,0,0,0.45)]"
  >
    <div className="h-[47px] grid grid-cols-[1fr_auto_1fr] items-center rounded-t-lg bg-[#323031] border-t border-t-[#555] border-b border-b-[#1b1a1a]">
      <label className="col-start-2 w-[338px] h-[34px] flex items-center gap-2 px-2 rounded-[3px] bg-white border-2 border-[#f2a287] text-[#555]">
        <SearchGlyph className="w-[14px] h-[14px]" />
        <span className="w-px h-4 bg-black" />
        <input type="text" aria-label="Search cities" className="flex-1 min-w-0 text-sm text-black outline-none" />
      </label>
      <button
        aria-label="Close"
        className="justify-self-end mr-[14px] w-5 h-5 rounded-full bg-[#e95420] text-white flex items-center justify-center"
      >
        <svg viewBox="0 0 8 8" className="w-2 h-2" stroke="currentColor" strokeWidth="1.4" aria-hidden="true">
          <path d="M.5 .5l7 7M7.500 .5l-7 7" />
        </svg>
      </button>
    </div>
    <div className="p-[7px]">
      <div className="relative border border-[#bcbcbc]">
        <WorldMap />
        <div className="absolute left-[52%] top-[27%] w-[169px] py-[13px] rounded-[10px] bg-[#333333]/70 text-white text-center">
          <p className="text-sm leading-4 font-bold">+08 (UTC+08)</p>
          <p className="text-xs leading-4">Ulaanbaatar, Mongolia</p>
          <p className="text-sm leading-4 font-bold">21:46</p>
        </div>
      </div>
    </div>
    {/* Pointer from the pin to the close button */}
    <svg viewBox="486 236 816 472" className="absolute inset-0 w-full h-full pointer-events-none" aria-hidden="true">
      <path d="M1103 440L1249 282L1255 277L1250 275L1270 270L1265 288L1262 283L1257 289Z" fill="#ff2210" />
    </svg>
  </div>
);

const App: React.FC = () => (
  <div className="h-screen flex flex-col overflow-hidden font-['Noto_Sans',sans-serif]">
    <TopBar />
    <div className="flex-1 min-h-0 flex">
      <Dock />
      <div className="relative flex-1 min-w-0 flex">
        <div className="w-[243px] shrink-0 flex flex-col">
          <div className="h-[47px] shrink-0 flex items-center justify-between px-[7px] bg-[#242122] border-r border-r-[#1a1818] border-b border-b-[#0e0e0e] text-[#a9a9a9]">
            <button aria-label="Search" className="w-[34px] h-8 rounded-[4px] bg-[#323031] flex items-center justify-center">
              <SearchGlyph className="w-[14px] h-[14px]" />
            </button>
            <h1 className="text-sm font-bold">Settings</h1>
            <button aria-label="Menu" className="w-[34px] h-8 rounded-[4px] bg-[#323031] flex items-center justify-center">
              <svg viewBox="0 0 10 10" className="w-[10px] h-[10px]" stroke="currentColor" aria-hidden="true">
                <path d="M0 .5h10M0 5h10M0 9.500h10" />
              </svg>
            </button>
          </div>
          <Sidebar />
        </div>

        <div className="flex-1 min-w-0 flex flex-col bg-[#aaaaaa]">
          <div className="h-[47px] shrink-0 grid grid-cols-[1fr_auto_1fr] items-center bg-[#242122] border-b border-[#0e0e0e] text-[#a9a9a9]">
            <h2 className="col-start-2 text-sm font-bold">Date &amp; Time</h2>
            <div className="flex gap-5 justify-self-end pr-[13px]">
              <button aria-label="Minimize" className="w-5 h-5 flex items-center justify-center">
                <span className="w-2 h-px mt-1 bg-current" />
              </button>
              <button aria-label="Restore" className="w-5 h-5 flex items-center justify-center">
                <svg viewBox="0 0 8 8" className="w-2 h-2" fill="none" stroke="currentColor" aria-hidden="true">
                  <path d="M.5 2.500h5v5h-5z" />
                  <path d="M2 .5h5.500V6" opacity=".5" />
                </svg>
              </button>
              <button aria-label="Close" className="w-5 h-5 rounded-full bg-[#a03a17] flex items-center justify-center">
                <svg viewBox="0 0 8 8" className="w-2 h-2" stroke="currentColor" strokeWidth="1.4" aria-hidden="true">
                  <path d="M.5 .5l7 7M7.500 .5l-7 7" />
                </svg>
              </button>
            </div>
          </div>
          <main className="flex-1 min-h-0 pt-8 flex flex-col items-center gap-8">
            <section className="w-[600px] max-w-full bg-[#b0b0b0] border border-[#858585]">
              <Setting id="auto-time" title="Automatic Date & Time" note="Requires internet access" on />
              <Setting id="auto-zone" title="Automatic Time Zone" note="Requires location services enabled and internet access" disabled />
              <div className="h-[55px] border-b border-[#9b9b9b]" />
              <div className="h-[54px]" />
            </section>
            <section className="w-[600px] max-w-full h-14 bg-[#b0b0b0] border border-[#858585]" />
          </main>
        </div>

        <div className="absolute inset-0 flex items-center justify-center">
          <TimezoneDialog />
        </div>
      </div>
    </div>
  </div>
);

export default App;
